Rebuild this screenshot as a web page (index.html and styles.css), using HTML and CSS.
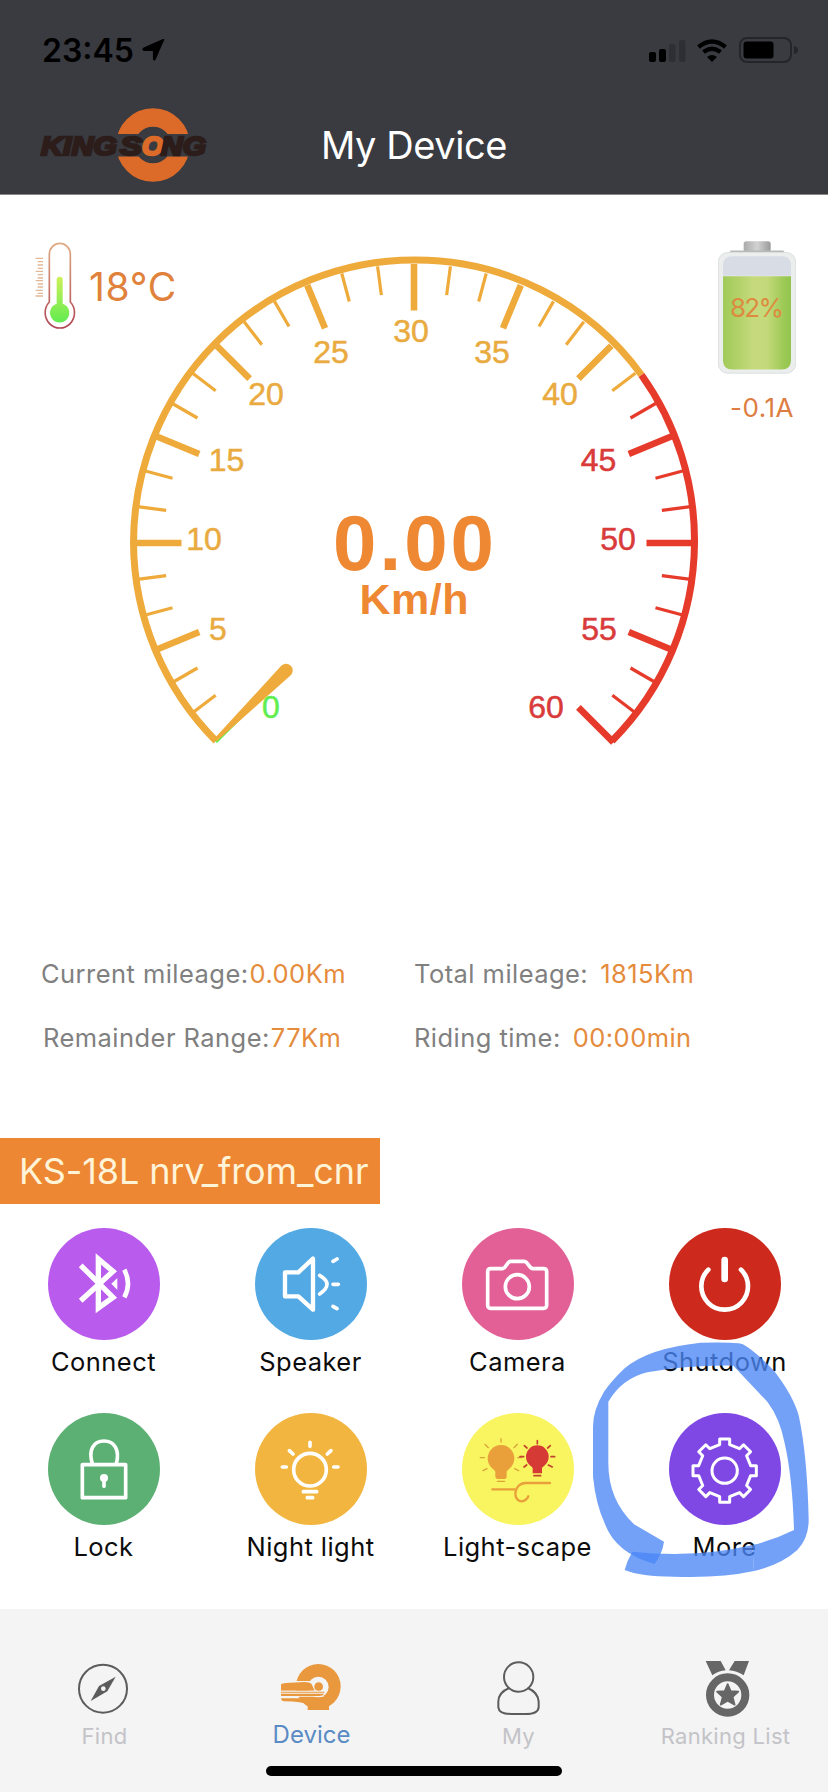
FILE: index.html
```
<!DOCTYPE html>
<html lang="en">
<head>
  <meta charset="UTF-8">
  <meta name="viewport" content="width=device-width, initial-scale=1.0">
  <title>My Device</title>
  <link rel="stylesheet" href="styles.css">
</head>
<body>
  <!-- Header -->
  <header class="header">
    <div class="status-bar">
      <span class="time">23:45</span>
      <svg class="location" viewBox="0 0 23 22"><path d="M21.500 1 L13 20.500 Q12 21.500 11.500 20 V11.500 H2 Q0 10 2 9 L20 1 Q22 0 21.500 1Z" stroke="#000" stroke-width="1.200"/></svg>
      <svg class="signals" viewBox="0 0 149 26">
        <rect x="0" y="15" width="7" height="10" rx="2"/>
        <rect x="10" y="12" width="7" height="13" rx="2"/>
        <rect x="20" y="7" width="6.500" height="18" rx="2" fill="#2e2f34"/>
        <rect x="30" y="3" width="6.500" height="22" rx="2" fill="#2e2f34"/>
        <g fill="none" stroke="#000" stroke-width="4.200">
          <path d="M49.500 10 Q63 -1 76.500 10"/>
          <path d="M54.500 15 Q63 8.500 71.500 15"/>
        </g>
        <path d="M58 20 Q63 16 68 20 L63 25Z"/>
        <rect x="91" y="1" width="51" height="24" rx="7" fill="none" stroke="#24252b" stroke-width="2"/>
        <rect x="94.500" y="4.500" width="30" height="17" rx="3"/>
        <path d="M145 9 Q149 10 149 13 T145 17Z" fill="#24252b"/>
      </svg>
    </div>
    <div class="title-bar">
      <svg class="logo" viewBox="0 0 170 76">
        <circle cx="114" cy="38" r="27.500" fill="none" stroke="#dc6b2a" stroke-width="18.500"/>
        <path d="M70 27 H100 Q114 16 128 27 H160 V49.500 H128 Q114 60 100 49.500 H70Z" fill="#393b40"/>
        <text x="2" y="47.500" textLength="76" lengthAdjust="spacingAndGlyphs">KING</text>
        <text x="81" y="47.500" textLength="22" lengthAdjust="spacingAndGlyphs">S</text>
        <text x="103" y="47.500" textLength="21" lengthAdjust="spacingAndGlyphs" class="logo-o">O</text>
        <text x="122" y="47.500" textLength="45" lengthAdjust="spacingAndGlyphs">NG</text>
      </svg>
      <h1>My Device</h1>
    </div>
  </header>

  <!-- Dashboard -->
  <section class="dashboard">
    <div class="temperature">
      <svg viewBox="0 0 126 270">
        <defs>
          <linearGradient id="glass" x1="0" y1="0" x2="0" y2="1">
            <stop offset="0" stop-color="#dfac83"/><stop offset="1" stop-color="#b04553"/>
          </linearGradient>
          <linearGradient id="liquid" x1="0" y1="0" x2="0" y2="1">
            <stop offset="0" stop-color="#cdf05a"/><stop offset="1" stop-color="#62ec50"/>
          </linearGradient>
        </defs>
        <path d="M43 183 V40 A31.500 33 0 0 1 106 40 V183 A44 46 0 1 1 43 183Z" fill="none" stroke="url(#glass)" stroke-width="5"/>
        <path d="M65 116 A9 9 0 0 1 83 116 V188 A29 29 0 1 1 65 188Z" fill="url(#liquid)"/>
        <path d="M2 52 H24 M8 62 H24 M8 72 H24 M8 82 H24 M2 91 H24 M8 101 H24 M8 111 H24 M2 119 H24 M8 129 H24 M8 138 H24 M2 148 H24 M8 157 H24 M2 165 H24" stroke="#e3b898" stroke-width="4"/>
      </svg>
      <span>18°C</span>
    </div>

    <svg class="gauge" viewBox="124 250 580 510">
      <path d="M216 741 A281 283 0 0 1 133.500 543 A280.500 283 0 0 1 414 260 A280.500 283 0 0 1 641.500 375" fill="none" stroke="#eeaa3a" stroke-width="7"/>
      <path d="M641.500 375 A280.500 283 0 0 1 694.500 543 A281 283 0 0 1 612 741" fill="none" stroke="#e63a2b" stroke-width="7"/>
      <g id="ticks"></g>
      <path d="M216 742 L245 713" stroke="#62ee50" stroke-width="3"/>
      <path d="M213 740 L281 666 A6.500 6.500 0 0 1 291 675 L217 741Z" fill="#eeaa3a"/>
      <g id="numbers" class="numbers"></g>
      <text class="speed" x="333" y="570" textLength="161">0.00</text>
      <text class="unit" x="359.500" y="613.500" textLength="109">Km/h</text>
    </svg>

    <div class="battery">
      <svg viewBox="0 0 234 398">
        <defs>
          <linearGradient id="charge">
            <stop offset="0" stop-color="#9fca58"/><stop offset=".2" stop-color="#b1d167"/><stop offset=".45" stop-color="#c6da7d"/>
            <stop offset=".65" stop-color="#c4d97a"/><stop offset=".9" stop-color="#9cc955"/><stop offset="1" stop-color="#93c54f"/>
          </linearGradient>
          <linearGradient id="metal">
            <stop offset="0" stop-color="#aaa"/><stop offset=".5" stop-color="#d2d2d2"/><stop offset="1" stop-color="#999"/>
          </linearGradient>
        </defs>
        <rect x="77" y="0" width="81" height="32" rx="8" fill="url(#metal)"/>
        <rect x="36" y="28" width="162" height="10" rx="4" fill="#b7b9ba"/>
        <rect x="1" y="34" width="232" height="362" rx="28" fill="#eceeee" stroke="#dcdfe0" stroke-width="3"/>
        <path d="M15 104 V73 Q15 45 43 45 H191 Q219 45 219 73 V104Z" fill="#d8dde5"/>
        <path d="M15 105 H219 V357 Q219 385 191 385 H43 Q15 385 15 357Z" fill="url(#charge)"/>
        <text x="36" y="229" textLength="162">82%</text>
      </svg>
      <span>-0.1A</span>
    </div>
  </section>

  <!-- Mileage -->
  <section class="stats">
    <p class="tight">Current mileage:<b>0.00Km</b></p>
    <p>Total mileage:<b>1815Km</b></p>
    <p class="tight indent">Remainder Range:<b>77Km</b></p>
    <p>Riding time:<b>00:00min</b></p>
  </section>

  <div class="device-name">KS-18L nrv_from_cnr</div>

  <!-- Functions -->
  <section class="functions">
    <div class="item">
      <svg class="round connect" viewBox="0 0 336 336">
        <path d="M98 112 L195 208 L151 240 V93 L195 130 L98 218" stroke-width="16"/>
        <path d="M190 167 L208 150 V186Z" class="solid"/>
        <path d="M229 125 Q251 167 229 208" stroke-width="14"/>
      </svg>
      <span>Connect</span>
    </div>
    <div class="item">
      <svg class="round speaker" viewBox="0 0 336 336">
        <path d="M90 133 H130 L174 92 V245 L130 205 H90Z" stroke-width="13"/>
        <path d="M194 142 Q238 168 194 198 M234 100 L246 93 M234 169 H250 M234 235 L246 242"/>
      </svg>
      <span>Speaker</span>
    </div>
    <div class="item">
      <svg class="round camera" viewBox="0 0 336 336">
        <path d="M86 122 H122 Q128 121 132 113 L139 104 Q142 100 146 100 H186 Q191 100 194 104 L206 119 Q209 122 214 122 H245 Q254 122 254 131 V232 Q254 241 245 241 H86 Q77 241 77 232 V131 Q77 122 86 122Z"/>
        <circle cx="166" cy="176" r="36"/>
      </svg>
      <span>Camera</span>
    </div>
    <div class="item">
      <svg class="round shutdown" viewBox="0 0 336 336">
        <path d="M167 96 V153" stroke-width="20"/>
        <path d="M118 125 A70 70 0 1 0 216 125" stroke-width="14"/>
      </svg>
      <span>Shutdown</span>
    </div>
    <div class="item">
      <svg class="round lock" viewBox="0 0 336 336">
        <rect x="103" y="155" width="130" height="99"/>
        <path d="M133 152 C120 110 137 84 168 84 S216 110 205 152"/>
        <circle cx="168" cy="195" r="12" class="solid"/>
        <path d="M168 195 V220"/>
      </svg>
      <span>Lock</span>
    </div>
    <div class="item">
      <svg class="round night" viewBox="0 0 336 336">
        <circle cx="165" cy="170" r="49"/>
        <path d="M165 88 V100 M103 113 L114 123 M228 113 L217 123 M82 162 H94 M236 162 H249 M145 236 H185 M157 254 H173"/>
      </svg>
      <span>Night light</span>
    </div>
    <div class="item">
      <svg class="round scape" viewBox="0 0 336 336">
        <g fill="#e9a03b" stroke="none">
          <circle cx="117" cy="136" r="40"/>
          <path d="M86 155 L100 176 V192 Q101 198 107 198 H128 Q133 198 134 192 V176 L149 155Z"/>
        </g>
        <g fill="#d63a35" stroke="none">
          <circle cx="226" cy="131" r="34"/>
          <path d="M199 147 L212 165 V181 H240 V165 L254 147Z"/>
        </g>
        <path d="M117 77 V87 M69 94 L79 104 M166 94 L156 104 M55 134 H67 M63 173 L75 167 M170 173 L158 167 M167 134 H178 M106 205 H128" stroke="#d9a43a" stroke-width="4"/>
        <path d="M226 83 V92 M187 98 L195 105 M265 98 L257 105 M174 131 H185 M267 131 H278 M186 162 L194 156 M271 162 L259 156 M216 188 H236" stroke="#c4432d" stroke-width="5"/>
        <path d="M91 229 H158 M264 210 H190 C154 211 151 264 179 265 Q193 264 199 250" stroke="#e9a03b" stroke-width="7"/>
      </svg>
      <span>Light-scape</span>
    </div>
    <div class="item">
      <svg class="round more" viewBox="0 0 336 336">
        <g transform="translate(167 173)" stroke-width="9">
          <path d="M-15 -78 V-95 H15 V-78 L44.600 -65.800 L56.600 -77.800 L77.800 -56.600 L65.800 -44.600 L78 -15 H95 V15 H78 L65.800 44.600 L77.800 56.600 L56.600 77.800 L44.600 65.800 L15 78 V95 H-15 V78 L-44.600 65.800 L-56.600 77.800 L-77.800 56.600 L-65.800 44.600 L-78 15 H-95 V-15 H-78 L-65.800 -44.600 L-77.800 -56.600 L-56.600 -77.800 L-44.600 -65.800Z"/>
          <circle r="38"/>
        </g>
      </svg>
      <span>More</span>
    </div>
  </section>

  <!-- Marker drawn around "More" -->
  <svg class="marker" viewBox="498 378 720 750">
    <path d="M985 402 Q965 396 860 398 Q700 415 632 475 Q595 510 570 545 Q537 600 537 650 V800 Q545 880 572 940 Q605 1030 722 1062 Q745 1030 750 995 L660 943 Q583 870 583 760 V575 Q625 505 700 487 Q820 465 958 467 L1060 575 Q1098 625 1112 700 Q1135 800 1140 960 Q1080 990 1015 1005 L1020 1083 Q1100 1065 1150 1020 Q1184 985 1184 930 Q1180 740 1155 620 Q1140 560 1080 482 Q1020 420 985 402Z"/>
    <path d="M1015 1005 Q850 1045 655 1025 Q640 1050 632 1080 Q680 1100 780 1100 Q920 1105 1020 1083Z"/>
  </svg>

  <!-- Tabs -->
  <nav class="tabs">
    <a class="tab">
      <svg viewBox="0 0 180 180">
        <circle cx="87" cy="89" r="72" fill="none" stroke="#5c5c5c" stroke-width="6"/>
        <path d="M125 53 L100 97 L50 126 L75 81Z" fill="#5c5c5c"/>
        <circle cx="88" cy="89" r="7" fill="#f4f4f4"/>
      </svg>
      <span>Find</span>
    </a>
    <a class="tab active">
      <svg viewBox="0 0 180 180">
        <circle cx="112" cy="82" r="67" fill="#e9983d"/>
        <path d="M0 55 H40 V150 H0Z" fill="#f4f4f4"/>
        <circle cx="112" cy="84" r="31" fill="#f4f4f4"/>
        <path d="M45 66 H92 V84 H45Z" fill="#f4f4f4"/>
        <path d="M0 76 Q4 73 14 72 L70 69 Q87 69 92 76 L101 95 H0Z" fill="#e9983d"/>
        <circle cx="113" cy="83" r="13" fill="#e9983d"/>
        <path d="M0 104 H128" stroke="#f4f4f4" stroke-width="18"/>
        <path d="M0 104 H130 Q125 111 115 111 H0Z M0 98 H130 V101 H0Z" fill="#e9983d"/>
        <path d="M0 118 H128 L80 152 V138 Q65 127 10 127 Q0 126 0 118Z M60 126 H160 L144 140 V153 H80 V142 L60 127Z" fill="#e9983d"/>
      </svg>
      <span>Device</span>
    </a>
    <a class="tab">
      <svg viewBox="0 0 180 180" fill="none" stroke="#5c5c5c" stroke-width="6">
        <circle cx="92" cy="54" r="44"/>
        <path d="M64 87 Q31 100 31 128 V145 Q33 165 70 165 H114 Q150 165 152 145 V128 Q150 100 119 87"/>
      </svg>
      <span>My</span>
    </a>
    <a class="tab">
      <svg viewBox="0 0 180 180" fill="#666">
        <circle cx="98" cy="108" r="53" fill="none" stroke="#666" stroke-width="24"/>
        <path d="M32 6 H77 L92 34 Q70 36 52 49Z M119 6 H162 L146 49 Q125 36 102 34Z"/>
        <path d="M98 75 L107 96 L130 98 L113 114 L119 137 L98 125 L77 137 L83 114 L66 98 L89 96Z" stroke="#666" stroke-width="5" stroke-linejoin="round"/>
      </svg>
      <span>Ranking List</span>
    </a>
    <div class="home-bar"></div>
  </nav>

  <script>
    const cx = 414, cy = 543;
    const amber = "#eeaa3a", red = "#e63a2b";
    // value, x of the label centre, baseline
    const labels = [
      [0, 271, 718], [5, 218, 640], [10, 204, 550], [15, 226.5, 470.5],
      [20, 266, 405], [25, 331, 363], [30, 411, 342], [35, 492, 363],
      [40, 560, 405], [45, 598.5, 470.5], [50, 618, 550], [55, 599, 640], [60, 546, 718]
    ];

    // Three steps for every 5 km/h, 7.5 degrees each
    let ticks = "";
    for (let i = 1; i <= 36; i++) {
      const angle = (135 + i * 7.5) * Math.PI / 180;
      const major = i % 3 === 0;
      const inner = major ? 232.5 : 250;
      const outer = i === 36 ? 282 : 279;
      const color = i <= 25 ? amber : red;
      const x = Math.cos(angle), y = Math.sin(angle);
      ticks += `<line x1="${cx + inner * x}" y1="${cy + inner * y}" x2="${cx + outer * x}" y2="${cy + outer * y}" stroke="${color}" stroke-width="${major ? 6.6 : 3.2}"/>`;
    }
    document.getElementById("ticks").innerHTML = ticks;

    document.getElementById("numbers").innerHTML = labels.map(([value, x, y]) => {
      const color = value === 0 ? "#62ee50" : value < 45 ? "#e9ab40" : "#d93a3a";
      return `<text x="${x}" y="${y}" fill="${color}" stroke="${color}">${value}</text>`;
    }).join("");
  </script>
</body>
</html>
```

FILE: styles.css
```
/* General Styles */
* {
  box-sizing: border-box;
}
body {
  margin: 0;
  width: 828px;
  height: 1792px;
  position: relative;
  display: flex;
  flex-direction: column;
  background: #fff;
  font-family: Inter, "Liberation Sans", sans-serif;
  overflow: hidden;
}
svg {
  display: block;
  flex-shrink: 0;
}

/* Header */
.header {
  height: 195px;
  background: #393b40;
  border-bottom: 1px solid #8a8580;
}
.status-bar {
  display: flex;
  align-items: center;
  height: 100px;
  padding: 0 30px 0 42px;
}
.time {
  font-size: 32px;
  font-weight: 600;
  width: 100px;
}
.location {
  width: 23px;
  height: 22px;
}
.signals {
  width: 149px;
  height: 26px;
  margin-left: auto;
}
.title-bar {
  display: grid;
  grid-template-columns: 170px 1fr 170px;
  align-items: center;
  height: 90px;
  padding: 0 39px;
}
.logo {
  width: 170px;
  height: 76px;
}
.logo text {
  font: italic bold 26px "Liberation Sans", sans-serif;
  fill: #2c1d1b;
  stroke: #2c1d1b;
  stroke-width: 2.4px;
}
.logo .logo-o {
  fill: #dc6b2a;
  stroke: #dc6b2a;
}
.title-bar h1 {
  margin: 0;
  text-align: center;
  font-size: 38px;
  font-weight: 400;
  letter-spacing: -0.4px;
  color: #fff;
}

/* Dashboard */
.dashboard {
  display: grid;
  grid-template-columns: 1fr;
  height: 747px;
}
.dashboard > * {
  grid-area: 1 / 1;
}
.temperature {
  display: flex;
  align-items: center;
  align-self: start;
  margin: 46px 0 0 35px;
  font-size: 39px;
  letter-spacing: 0.7px;
  color: #e0823b;
}
.temperature svg {
  width: 42px;
  height: 90px;
}
.temperature span {
  margin-left: 12px;
}
.gauge {
  width: 580px;
  height: 510px;
  justify-self: center;
  margin-top: 55px;
}
.numbers {
  font: 32px "Liberation Sans", sans-serif;
  stroke-width: 0.5px;
  text-anchor: middle;
}
.speed,
.unit {
  font: bold 78px "Liberation Sans", sans-serif;
  fill: #ee8833;
}
.unit {
  font-size: 43px;
}
.battery {
  justify-self: end;
  align-self: start;
  margin: 46px 32px 0 0;
  font-size: 26px;
  color: #dd7d42;
}
.battery svg {
  width: 78px;
  height: 133px;
}
.battery text {
  font-size: 78px;
  fill: #dd8b3f;
}
.battery span {
  display: block;
  margin: 18px 0 0 12px;
  line-height: 32px;
  letter-spacing: 0.5px;
}

/* Mileage */
.stats {
  display: grid;
  grid-template-columns: 373px 1fr;
  padding-left: 41px;
  margin-bottom: 69px;
}
.stats p {
  margin: 0;
  font-size: 25.5px;
  line-height: 63.5px;
  letter-spacing: 0.45px;
  color: #808080;
  white-space: nowrap;
}
.stats b {
  margin-left: 12px;
  font-weight: 400;
  color: #e58b3c;
}
.stats .tight b {
  margin-left: 1px;
}
.stats .indent {
  padding-left: 2px;
}
.device-name {
  width: 380px;
  height: 66px;
  padding-left: 19px;
  background: #ed8733;
  color: #fff3d8;
  font-size: 36px;
  line-height: 66px;
  letter-spacing: -0.1px;
  white-space: nowrap;
}

/* Functions */
.functions {
  display: grid;
  grid-template-columns: repeat(4, 207px);
  row-gap: 36px;
  margin-top: 24px;
}
.item {
  display: flex;
  flex-direction: column;
  align-items: center;
  font-size: 25.5px;
  line-height: 30px;
  letter-spacing: 0.45px;
  color: #0c0c0c;
}
.item span {
  margin-top: 7px;
}
.round {
  width: 112px;
  height: 112px;
  border-radius: 50%;
  fill: none;
  stroke: #fff;
  stroke-width: 11px;
  stroke-linecap: round;
}
.round .solid {
  fill: #fff;
  stroke: none;
}
.connect { background: #b95bed; stroke-linecap: butt; }
.speaker { background: #52a9e4; stroke-linejoin: round; }
.camera { background: #e26096; }
.shutdown { background: #cd2a1d; }
.lock { background: #5cb073; stroke-linejoin: round; }
.night { background: #f2b640; }
.scape { background: #f9f560; }
.more { background: #7f48e5; stroke-linejoin: round; }

.marker {
  position: absolute;
  left: 580px;
  top: 1336px;
  width: 240px;
  height: 250px;
  fill: #4b87f6;
  fill-opacity: 0.78;
}

/* Tabs */
.tabs {
  position: relative;
  display: grid;
  grid-template-columns: repeat(4, 207px);
  height: 183px;
  margin-top: auto;
  padding-top: 50px;
  background: #f4f4f4;
}
.tab {
  display: flex;
  flex-direction: column;
  align-items: center;
  font-size: 22px;
  line-height: 30px;
  letter-spacing: 0.3px;
  color: #c3c3c8;
}
.tab svg {
  width: 60px;
  height: 60px;
}
.tab span {
  margin-top: 2px;
  padding-left: 2px;
}
.tab.active {
  font-size: 24px;
  letter-spacing: 0;
  color: #5b8bc5;
}
.tab.active span {
  margin-top: 1px;
}
.home-bar {
  position: absolute;
  left: 266px;
  bottom: 16px;
  width: 296px;
  height: 10px;
  border-radius: 5px;
  background: #000;
}
```
